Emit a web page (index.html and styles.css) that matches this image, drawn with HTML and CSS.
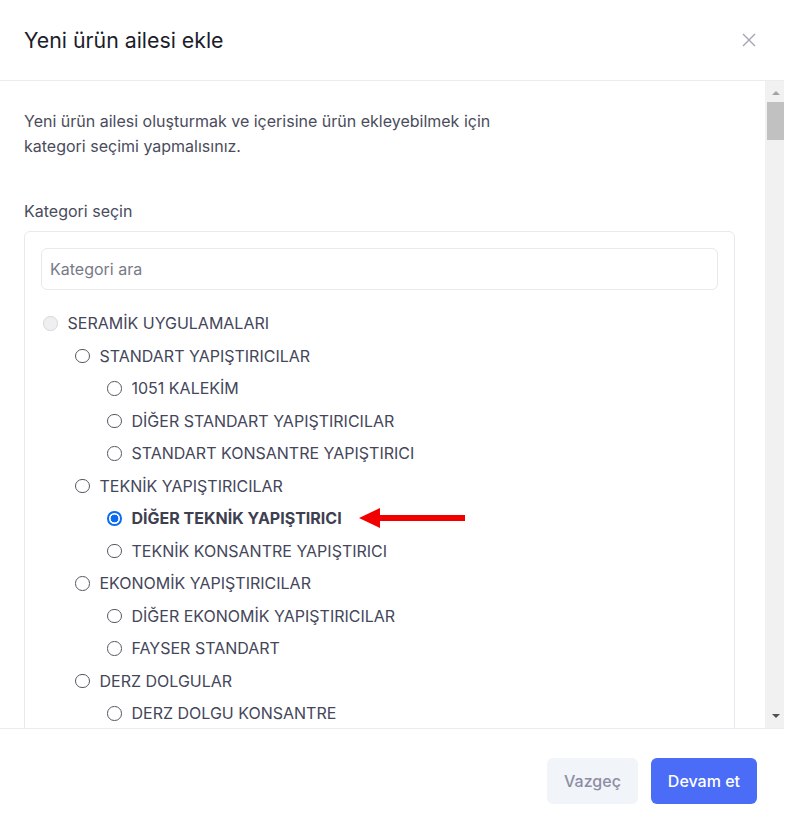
FILE: index.html
```html
<!DOCTYPE html>
<html lang="tr">
<head>
<meta charset="utf-8">
<title>Yeni ürün ailesi ekle</title>
<link rel="stylesheet" href="styles.css">
</head>
<body>
<div class="modal">
  <header class="modal-header">
    <h1 class="modal-title">Yeni ürün ailesi ekle</h1>
    <button class="close" aria-label="Kapat">
      <svg width="14" height="14" viewBox="0 0 14 14"><path d="M1 1L13 13M13 1L1 13" stroke="#a3a6b0" stroke-width="1.4" fill="none"/></svg>
    </button>
  </header>
  <div class="modal-main">
    <div class="modal-body">
      <p class="intro">Yeni ürün ailesi oluşturmak ve içerisine ürün ekleyebilmek için kategori seçimi yapmalısınız.</p>
      <div class="field-label">Kategori seçin</div>
      <div class="tree-box">
        <input class="search" type="text" placeholder="Kategori ara">
        <ul class="tree">
          <li class="row lvl0"><input type="radio" name="cat" disabled><span>SERAMİK UYGULAMALARI</span></li>
          <li class="row lvl1"><input type="radio" name="cat"><span>STANDART YAPIŞTIRICILAR</span></li>
          <li class="row lvl2"><input type="radio" name="cat"><span>1051 KALEKİM</span></li>
          <li class="row lvl2"><input type="radio" name="cat"><span>DİĞER STANDART YAPIŞTIRICILAR</span></li>
          <li class="row lvl2"><input type="radio" name="cat"><span>STANDART KONSANTRE YAPIŞTIRICI</span></li>
          <li class="row lvl1"><input type="radio" name="cat"><span>TEKNİK YAPIŞTIRICILAR</span></li>
          <li class="row lvl2 selected"><input type="radio" name="cat" checked><span>DİĞER TEKNİK YAPIŞTIRICI</span>
            <svg class="arrow" width="108" height="22" viewBox="0 0 108 22"><polygon points="0,11 21,1 21,8 106,8 106,14 21,14 21,21" fill="#f20000"/></svg>
          </li>
          <li class="row lvl2"><input type="radio" name="cat"><span>TEKNİK KONSANTRE YAPIŞTIRICI</span></li>
          <li class="row lvl1"><input type="radio" name="cat"><span>EKONOMİK YAPIŞTIRICILAR</span></li>
          <li class="row lvl2"><input type="radio" name="cat"><span>DİĞER EKONOMİK YAPIŞTIRICILAR</span></li>
          <li class="row lvl2"><input type="radio" name="cat"><span>FAYSER STANDART</span></li>
          <li class="row lvl1"><input type="radio" name="cat"><span>DERZ DOLGULAR</span></li>
          <li class="row lvl2"><input type="radio" name="cat"><span>DERZ DOLGU KONSANTRE</span></li>
        </ul>
      </div>
    </div>
    <div class="scrollbar" aria-hidden="true">
      <div class="sb-btn"><span class="tri tri-up"></span></div>
      <div class="sb-thumb"></div>
      <div class="sb-btn sb-btn-down"><span class="tri tri-down"></span></div>
    </div>
  </div>
  <footer class="modal-footer">
    <button class="btn btn-light">Vazgeç</button>
    <button class="btn btn-primary">Devam et</button>
  </footer>
</div>
</body>
</html>
```
FILE: styles.css
```css
* { box-sizing: border-box; }
html, body { margin: 0; padding: 0; background: #ffffff; }
body { font-family: Inter, "Noto Sans", sans-serif; }

.modal {
  width: 784px;
  height: 832px;
  display: flex;
  flex-direction: column;
  background: #fff;
}

.modal-header {
  height: 81px;
  flex: none;
  display: flex;
  align-items: center;
  justify-content: space-between;
  padding: 0 28px 1px 24px;
  border-bottom: 1px solid #ebebf0;
}
.modal-title {
  margin: 0;
  font-size: 21.3px;
  font-weight: 400;
  color: #1c1d2b;
  line-height: 28px;
}
.close {
  border: 0;
  background: none;
  padding: 0;
  width: 14px;
  height: 14px;
  display: flex;
}

.modal-main {
  flex: 1;
  min-height: 0;
  display: flex;
}
.modal-body {
  flex: 1;
  min-width: 0;
  overflow: hidden;
  padding: 28px 30px 0 24px;
}

.scrollbar {
  width: 19px;
  flex: none;
  background: #f1f1f1;
  display: flex;
  flex-direction: column;
}
.sb-btn {
  height: 20px;
  flex: none;
  display: flex;
  justify-content: center;
  align-items: flex-start;
  padding: 10px 0 0 2px;
}
.sb-btn-down {
  margin-top: auto;
  padding-top: 6px;
}
.sb-thumb {
  height: 38px;
  margin: 1px 0 0 2px;
  background: #c1c1c1;
}
.tri {
  width: 0;
  height: 0;
  border-left: 4px solid transparent;
  border-right: 4px solid transparent;
}
.tri-up { border-bottom: 4px solid #a3a3a3; }
.tri-down { border-top: 4px solid #505050; }

.intro {
  margin: 0;
  max-width: 500px;
  font-size: 16px;
  line-height: 25px;
  color: #4a4c5c;
}
.field-label {
  margin-top: 40px;
  font-size: 16px;
  line-height: 25px;
  color: #4a4c5c;
  margin-bottom: 7px;
}
.tree-box {
  border: 1px solid #e8e9ee;
  border-radius: 6px;
  padding: 16px;
  min-height: 1000px;
}
.search {
  display: block;
  width: 100%;
  height: 42px;
  border: 1px solid #e8e9ee;
  border-radius: 6px;
  padding: 0 8px;
  font-family: inherit;
  font-size: 16px;
  color: #333;
  outline: none;
}
.search::placeholder { color: #787a88; }

.tree {
  list-style: none;
  margin: 17px 0 0;
  padding: 0 0 0 2px;
}
.row {
  height: 32.5px;
  display: flex;
  align-items: center;
  font-size: 16px;
  color: #44465a;
}
.lvl1 { padding-left: 32px; }
.lvl2 { padding-left: 64px; }
.row span { margin-left: 10px; }
.row.selected span { font-weight: 700; color: #3e4050; }
.row input {
  appearance: none;
  -webkit-appearance: none;
  margin: 0;
  width: 14.5px;
  height: 14.5px;
  border-radius: 50%;
  border: 1.3px solid #555862;
  background: #fff;
  flex: none;
}
.row input:disabled {
  border-color: #d6d7dc;
  background: #efeff2;
}
.row input:checked {
  border: 2px solid #0b6cf2;
  background: radial-gradient(circle, #0b6cf2 0 3.6px, #fff 4.2px);
}
.arrow { margin-left: 17px; }

.modal-footer {
  flex: none;
  height: 104px;
  border-top: 1px solid #ebebf0;
  display: flex;
  justify-content: flex-end;
  align-items: flex-start;
  gap: 13px;
  padding: 29px 27px 0 0;
}
.btn {
  height: 46px;
  padding: 0 17px;
  border: 0;
  border-radius: 6px;
  font-family: inherit;
  font-size: 16px;
  font-weight: 500;
}
.btn-light { background: #f1f4f8; color: #8d8ea3; }
.btn-primary { background: #4a6cf7; color: #fff; }
```
